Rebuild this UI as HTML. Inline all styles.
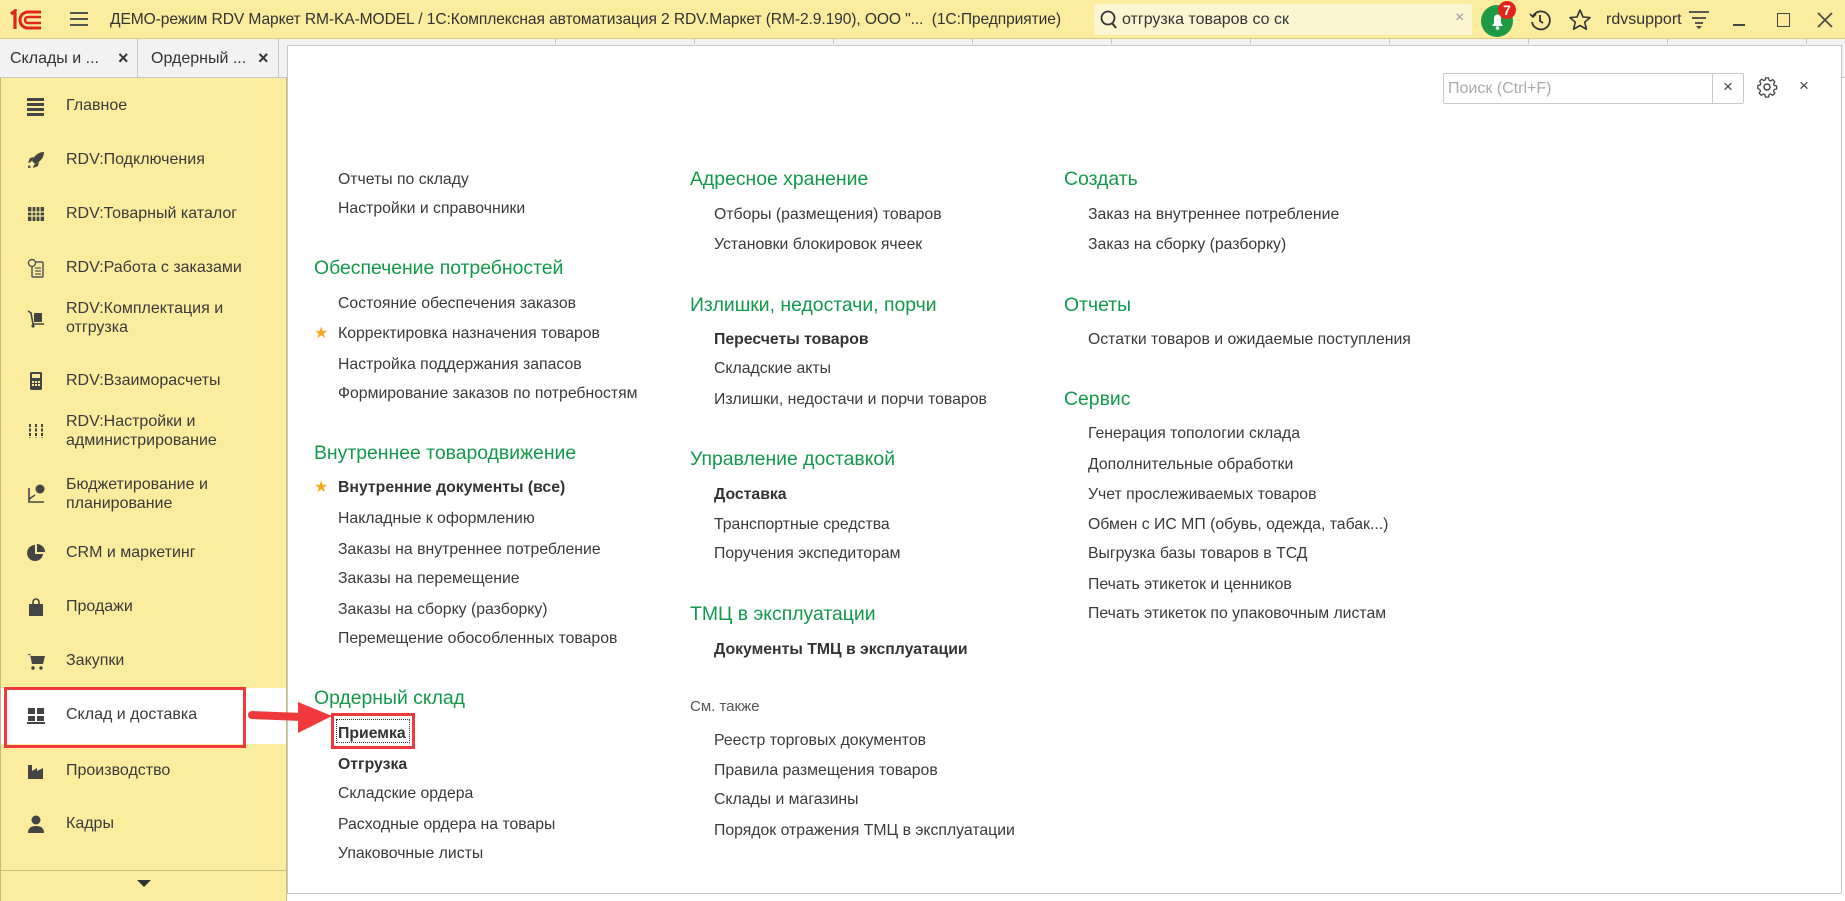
<!DOCTYPE html>
<html><head><meta charset="utf-8">
<style>
*{margin:0;padding:0;box-sizing:border-box}
body{width:1845px;height:901px;position:relative;overflow:hidden;background:#fff;font-family:"Liberation Sans",Arial,sans-serif;color:#3a3a3a}
.a{position:absolute;white-space:nowrap}
#title{left:0;top:0;width:1845px;height:39px;background:#fbec9e;border-bottom:1px solid #d9c97a}
#tabs{left:0;top:39px;width:1845px;height:39px;background:#f2f2f2;border-bottom:1px solid #c8c8c8}
#side{left:0;top:78px;width:287px;height:823px;background:#fbec9e;border-right:1px solid #c9bb78;border-left:1px solid #c9bb78}
.s{position:absolute;left:66px;font-size:16px;line-height:19px;color:#3a3a3a}
.ic{position:absolute;left:26px;width:20px;height:20px}
.t{position:absolute;font-size:15.8px;line-height:20px;white-space:nowrap;color:#3a3a3a}
.h{position:absolute;font-size:19.4px;line-height:24px;white-space:nowrap;color:#12994a}
.b{font-weight:bold;color:#333}
.c1{left:338px}.h1{left:314px}.c2{left:714px}.h2{left:690px}.c3{left:1088px}.h3{left:1064px}
.star{position:absolute;left:314px;color:#f5a623;font-size:16px;line-height:20px}
</style></head><body>
<div id="title" class="a"></div>
<svg class="a" style="left:8px;top:9px" width="36" height="22" viewBox="0 0 36 22"><path d="M3 5l4-3v18" stroke="#e0251b" stroke-width="3.2" fill="none"/><path d="M33 19H20a8 8 0 1 1 0-16h13" stroke="#e0251b" stroke-width="3" fill="none"/><path d="M33 14H20a3 3 0 1 1 0-6h13" stroke="#e0251b" stroke-width="2.6" fill="none"/></svg>
<div class="a" style="left:70px;top:12px;width:18px;height:2px;background:#555;box-shadow:0 6px 0 #555,0 12px 0 #555"></div>
<div class="a" style="left:110px;top:10px;font-size:15.6px;line-height:20px;color:#333;letter-spacing:-0.1px">ДЕМО-режим RDV Маркет RM-KA-MODEL / 1С:Комплексная автоматизация 2 RDV.Маркет (RM-2.9.190), ООО "...&nbsp;&nbsp;(1С:Предприятие)</div>
<div class="a" style="left:1094px;top:4px;width:378px;height:31px;background:#fcf5d2;border-radius:3px"></div>
<svg class="a" style="left:1099px;top:9px" width="20" height="22" viewBox="0 0 20 22"><circle cx="9" cy="9" r="6.5" stroke="#333" stroke-width="1.8" fill="none"/><path d="M13 14l4 5" stroke="#333" stroke-width="2"/></svg>
<div class="a" style="left:1122px;top:10px;font-size:16px;line-height:20px;color:#333">отгрузка товаров со ск</div>
<div class="a" style="left:1455px;top:9px;font-size:16px;color:#999">×</div>
<svg class="a" style="left:1480px;top:0" width="40" height="39" viewBox="0 0 40 39"><circle cx="17" cy="21" r="16" fill="#1f9a44"/><path d="M12 26h11l-2-3v-5a3.5 3.5 0 0 0-7 0v5z" fill="#fff"/><circle cx="17.5" cy="28" r="1.8" fill="#fff"/><circle cx="27" cy="10" r="9" fill="#e0251b"/><text x="27" y="15" font-size="14" font-weight="bold" fill="#fff" text-anchor="middle" font-family="Liberation Sans">7</text></svg>
<svg class="a" style="left:1528px;top:8px" width="24" height="24" viewBox="0 0 24 24"><path d="M5 8a9 9 0 1 1-1 6" stroke="#333" stroke-width="1.8" fill="none"/><path d="M2 6l3 3 3-3" stroke="#333" stroke-width="1.6" fill="none"/><path d="M12 7v6l3 2" stroke="#333" stroke-width="1.8" fill="none"/></svg>
<svg class="a" style="left:1568px;top:8px" width="24" height="24" viewBox="0 0 24 24"><path d="M12 2l3 7 7 .6-5.3 4.6 1.7 7L12 17.5 5.6 21.2l1.7-7L2 9.6 9 9z" stroke="#333" stroke-width="1.6" fill="none" stroke-linejoin="round"/></svg>
<div class="a" style="left:1606px;top:10px;font-size:16px;line-height:20px;color:#333">rdvsupport</div>
<svg class="a" style="left:1688px;top:10px" width="22" height="20" viewBox="0 0 22 20"><path d="M1 2h20M4 8h14M7 13h8" stroke="#444" stroke-width="1.8"/><path d="M8 16h6l-3 3z" fill="#444"/></svg>
<div class="a" style="left:1733px;top:24px;width:12px;height:2px;background:#444"></div>
<div class="a" style="left:1777px;top:13px;width:13px;height:14px;border:1.6px solid #444"></div>
<svg class="a" style="left:1817px;top:12px" width="16" height="16" viewBox="0 0 16 16"><path d="M1 1l14 14M15 1L1 15" stroke="#444" stroke-width="1.6"/></svg>

<div id="tabs" class="a"></div>
<div class="a" style="left:0;top:39px;width:138px;height:39px;border-right:1px solid #c8c8c8"></div>
<div class="a" style="left:10px;top:49px;font-size:16px;line-height:20px;color:#333">Склады и ...</div>
<div class="a" style="left:118px;top:48px;font-size:18px;color:#333;font-weight:bold">×</div>
<div class="a" style="left:138px;top:39px;width:141px;height:39px;border-right:1px solid #c8c8c8"></div>
<div class="a" style="left:151px;top:49px;font-size:16px;line-height:20px;color:#333">Ордерный ...</div>
<div class="a" style="left:258px;top:48px;font-size:18px;color:#333;font-weight:bold">×</div>
<div class="a" style="left:555px;top:39px;width:1px;height:5px;background:#c8c8c8;box-shadow:139px 0 0 #c8c8c8,278px 0 0 #c8c8c8,417px 0 0 #c8c8c8,556px 0 0 #c8c8c8,695px 0 0 #c8c8c8,834px 0 0 #c8c8c8,973px 0 0 #c8c8c8,1112px 0 0 #c8c8c8,1251px 0 0 #c8c8c8"></div>

<div class="a" style="left:287px;top:45px;width:1555px;height:849px;background:#fff;border:1px solid #c8c8c8"></div>
<div class="a" style="left:1443px;top:73px;width:301px;height:31px;border:1px solid #c8c8c8;border-radius:2px"></div>
<div class="a" style="left:1712px;top:74px;width:1px;height:29px;background:#c8c8c8"></div>
<div class="a" style="left:1448px;top:79px;font-size:16px;line-height:20px;color:#aaa">Поиск (Ctrl+F)</div>
<div class="a" style="left:1723px;top:77px;font-size:17px;color:#444">×</div>
<svg class="a" style="left:1756px;top:76px" width="22" height="22" viewBox="0 0 24 24"><circle cx="12" cy="12" r="3.3" stroke="#444" stroke-width="1.6" fill="none"/><path d="M10.3 2h3.4l.5 2.6 1.8.8 2.2-1.5 2.4 2.4-1.5 2.2.8 1.8 2.6.5v3.4l-2.6.5-.8 1.8 1.5 2.2-2.4 2.4-2.2-1.5-1.8.8-.5 2.6h-3.4l-.5-2.6-1.8-.8-2.2 1.5-2.4-2.4 1.5-2.2-.8-1.8L2 13.7v-3.4l2.6-.5.8-1.8-1.5-2.2 2.4-2.4 2.2 1.5 1.8-.8z" stroke="#444" stroke-width="1.4" fill="none" stroke-linejoin="round"/></svg>
<div class="a" style="left:1799px;top:76px;font-size:17px;color:#444">×</div>

<div id="side" class="a"></div>
<div class="a" style="left:1px;top:688px;width:285px;height:56px;background:#fff"></div>
<div class="a" style="left:1px;top:870px;width:285px;height:1px;background:#c9bb78"></div>
<div class="a" style="left:137px;top:880px;width:0;height:0;border-left:7px solid transparent;border-right:7px solid transparent;border-top:7px solid #333"></div>

<div class="ic" style="top:96px;left:27px"><div style="width:17px;height:2.5px;background:#444;margin-top:2px;box-shadow:0 5px 0 #444,0 10px 0 #444,0 15px 0 #444"></div></div>
<div class="s" style="top:96px">Главное</div>
<svg class="ic" style="top:150px" viewBox="0 0 20 20"><path d="M18 2c-6 0-10 4-12 9l3 3c5-2 9-6 9-12zM5 12l-3 1 2-5 4-1zM8 15l-1 3 5-2 1-4zM3 15c-1 1-1 3-1 3s2 0 3-1z" fill="#444"/></svg>
<div class="s" style="top:150px">RDV:Подключения</div>
<svg class="ic" style="top:204px" viewBox="0 0 20 20"><path d="M2 3h16v14H2z" fill="#444"/><path d="M2 8h16M2 12h16M6 3v14M10 3v14M14 3v14" stroke="#fbec9e" stroke-width="1.2"/></svg>
<div class="s" style="top:204px">RDV:Товарный каталог</div>
<svg class="ic" style="top:258px" viewBox="0 0 20 20"><rect x="6" y="4" width="11" height="15" rx="1" stroke="#555" stroke-width="1.5" fill="none"/><circle cx="6" cy="5" r="3.5" fill="#fbec9e" stroke="#555" stroke-width="1.4"/><path d="M9 10h6M9 13h6M9 16h6" stroke="#555" stroke-width="1.2"/></svg>
<div class="s" style="top:258px">RDV:Работа с заказами</div>
<svg class="ic" style="top:308px" viewBox="0 0 20 20"><path d="M2 3l3 2 2 11h11" stroke="#444" stroke-width="1.6" fill="none"/><rect x="8" y="5" width="8" height="9" fill="#444"/><circle cx="7" cy="18" r="1.6" fill="#444"/></svg>
<div class="s" style="top:299px">RDV:Комплектация и<br>отгрузка</div>
<svg class="ic" style="top:371px" viewBox="0 0 20 20"><rect x="4" y="1" width="12" height="18" rx="1.5" fill="#444"/><rect x="6" y="3" width="8" height="4" fill="#fbec9e"/><path d="M6 10h2v2H6zM9 10h2v2H9zM12 10h2v2h-2zM6 13h2v2H6zM9 13h2v2H9zM12 13h2v2h-2z" fill="#fbec9e"/></svg>
<div class="s" style="top:371px">RDV:Взаиморасчеты</div>
<svg class="ic" style="top:421px" viewBox="0 0 20 20"><path d="M4 3v14M10 3v14M16 3v14" stroke="#444" stroke-width="2" stroke-dasharray="3 1.5"/></svg>
<div class="s" style="top:412px">RDV:Настройки и<br>администрирование</div>
<svg class="ic" style="top:484px" viewBox="0 0 20 20"><path d="M3 4v14h15" stroke="#444" stroke-width="1.6" fill="none"/><path d="M3 15l6-4" stroke="#444" stroke-width="1.4"/><circle cx="14" cy="5" r="4.5" fill="#444"/></svg>
<div class="s" style="top:475px">Бюджетирование и<br>планирование</div>
<svg class="ic" style="top:543px" viewBox="0 0 20 20"><path d="M9 2a8 8 0 1 0 8 9H9z" fill="#444"/><path d="M11 1v8h8a8 8 0 0 0-8-8z" fill="#444"/></svg>
<div class="s" style="top:543px">CRM и маркетинг</div>
<svg class="ic" style="top:597px" viewBox="0 0 20 20"><path d="M3 7h14v12H3z" fill="#444"/><path d="M7 8V5a3 3 0 0 1 6 0v3" stroke="#444" stroke-width="1.6" fill="none"/></svg>
<div class="s" style="top:597px">Продажи</div>
<svg class="ic" style="top:651px" viewBox="0 0 20 20"><path d="M1 3h3l2 10h11l2-8H5" fill="#444"/><circle cx="7" cy="17" r="1.7" fill="#444"/><circle cx="15" cy="17" r="1.7" fill="#444"/></svg>
<div class="s" style="top:651px">Закупки</div>
<svg class="ic" style="top:705px" viewBox="0 0 20 20"><path d="M2 3h7v6H2zM11 3h7v6h-7zM2 11h7v5H2zM11 11h7v5h-7zM1 17h18v2H1z" fill="#444"/></svg>
<div class="s" style="top:705px">Склад и доставка</div>
<svg class="ic" style="top:761px" viewBox="0 0 20 20"><path d="M2 18V4h4v6l5-3v3l6-3v11z" fill="#444"/></svg>
<div class="s" style="top:761px">Производство</div>
<svg class="ic" style="top:814px" viewBox="0 0 20 20"><circle cx="10" cy="6" r="4.5" fill="#444"/><path d="M2 19c0-5 3-7 8-7s8 2 8 7z" fill="#444"/></svg>
<div class="s" style="top:814px">Кадры</div>

<div class="a" style="left:4px;top:687px;width:242px;height:61px;border:3px solid #f0393c"></div>

<svg class="a" style="left:248px;top:700px" width="86" height="36" viewBox="0 0 86 36"><path d="M4 15l50 2" stroke="#f0393c" stroke-width="8" stroke-linecap="round"/><path d="M50 2l34 14-34 17z" fill="#f0393c"/></svg>

<div class="t c1" style="top:170px">Отчеты по складу</div>
<div class="t c1" style="top:199px">Настройки и справочники</div>
<div class="h h1" style="top:256px">Обеспечение потребностей</div>
<div class="t c1" style="top:294px">Состояние обеспечения заказов</div>
<div class="star" style="top:324px">★</div>
<div class="t c1" style="top:324px">Корректировка назначения товаров</div>
<div class="t c1" style="top:355px">Настройка поддержания запасов</div>
<div class="t c1" style="top:384px">Формирование заказов по потребностям</div>
<div class="h h1" style="top:441px">Внутреннее товародвижение</div>
<div class="star" style="top:478px">★</div>
<div class="t c1 b" style="top:478px">Внутренние документы (все)</div>
<div class="t c1" style="top:509px">Накладные к оформлению</div>
<div class="t c1" style="top:540px">Заказы на внутреннее потребление</div>
<div class="t c1" style="top:569px">Заказы на перемещение</div>
<div class="t c1" style="top:600px">Заказы на сборку (разборку)</div>
<div class="t c1" style="top:629px">Перемещение обособленных товаров</div>
<div class="h h1" style="top:686px">Ордерный склад</div>
<div class="a" style="left:331px;top:713px;width:84px;height:36px;border:3px solid #f0393c"></div>
<div class="a" style="left:336px;top:719px;width:74px;height:24px;border:1px dotted #333"></div>
<div class="t c1 b" style="top:724px">Приемка</div>
<div class="t c1 b" style="top:755px">Отгрузка</div>
<div class="t c1" style="top:784px">Складские ордера</div>
<div class="t c1" style="top:815px">Расходные ордера на товары</div>
<div class="t c1" style="top:844px">Упаковочные листы</div>

<div class="h h2" style="top:167px">Адресное хранение</div>
<div class="t c2" style="top:205px">Отборы (размещения) товаров</div>
<div class="t c2" style="top:235px">Установки блокировок ячеек</div>
<div class="h h2" style="top:293px">Излишки, недостачи, порчи</div>
<div class="t c2 b" style="top:330px">Пересчеты товаров</div>
<div class="t c2" style="top:359px">Складские акты</div>
<div class="t c2" style="top:390px">Излишки, недостачи и порчи товаров</div>
<div class="h h2" style="top:447px">Управление доставкой</div>
<div class="t c2 b" style="top:485px">Доставка</div>
<div class="t c2" style="top:515px">Транспортные средства</div>
<div class="t c2" style="top:544px">Поручения экспедиторам</div>
<div class="h h2" style="top:602px">ТМЦ в эксплуатации</div>
<div class="t c2 b" style="top:640px">Документы ТМЦ в эксплуатации</div>
<div class="t" style="left:690px;top:697px;font-size:15px;color:#555">См. также</div>
<div class="t c2" style="top:731px">Реестр торговых документов</div>
<div class="t c2" style="top:761px">Правила размещения товаров</div>
<div class="t c2" style="top:790px">Склады и магазины</div>
<div class="t c2" style="top:821px">Порядок отражения ТМЦ в эксплуатации</div>

<div class="h h3" style="top:167px">Создать</div>
<div class="t c3" style="top:205px">Заказ на внутреннее потребление</div>
<div class="t c3" style="top:235px">Заказ на сборку (разборку)</div>
<div class="h h3" style="top:293px">Отчеты</div>
<div class="t c3" style="top:330px">Остатки товаров и ожидаемые поступления</div>
<div class="h h3" style="top:387px">Сервис</div>
<div class="t c3" style="top:424px">Генерация топологии склада</div>
<div class="t c3" style="top:455px">Дополнительные обработки</div>
<div class="t c3" style="top:485px">Учет прослеживаемых товаров</div>
<div class="t c3" style="top:515px">Обмен с ИС МП (обувь, одежда, табак...)</div>
<div class="t c3" style="top:544px">Выгрузка базы товаров в ТСД</div>
<div class="t c3" style="top:575px">Печать этикеток и ценников</div>
<div class="t c3" style="top:604px">Печать этикеток по упаковочным листам</div>
</body></html>
